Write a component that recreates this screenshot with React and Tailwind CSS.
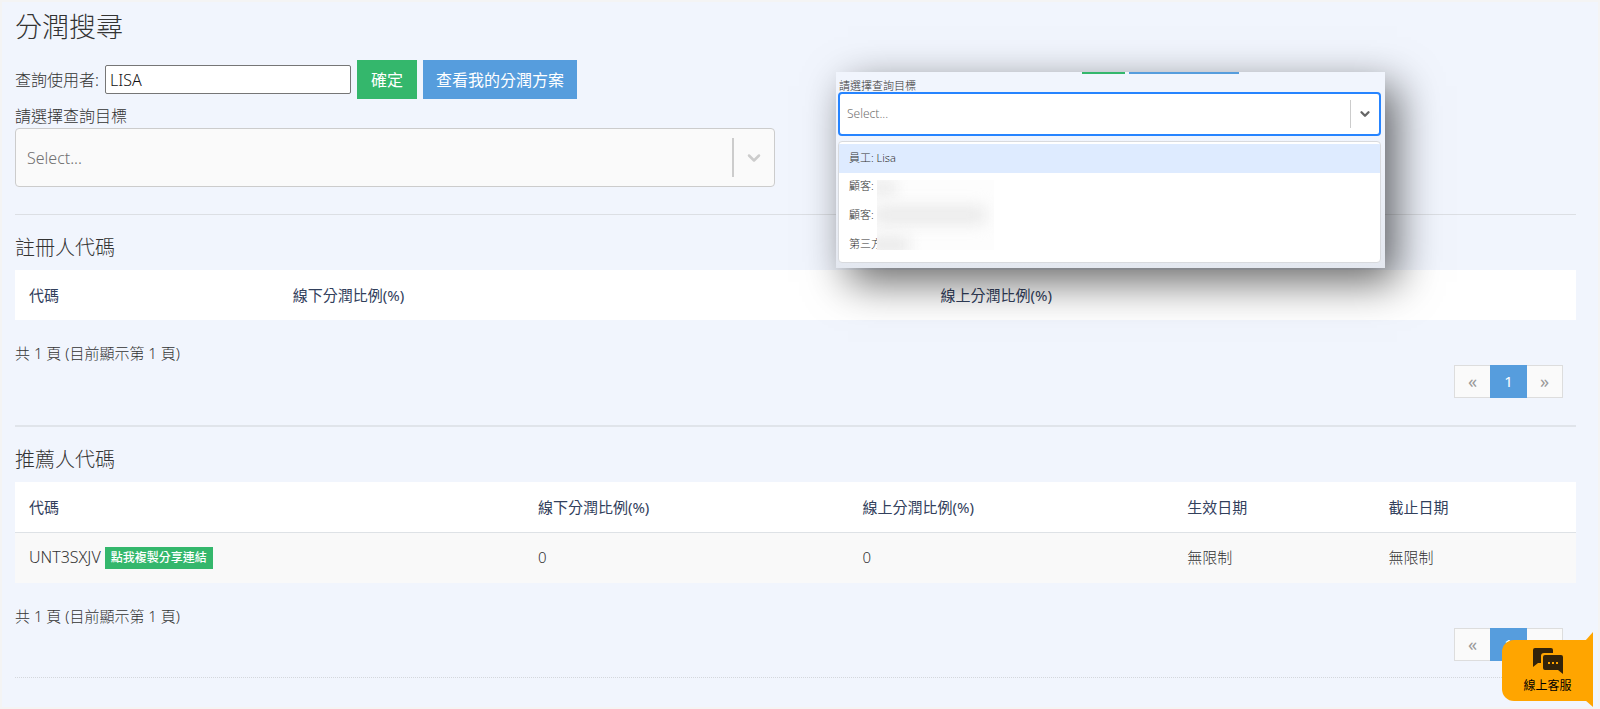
import React from 'react'
import { ChevronDown } from 'lucide-react'

const registerColumns = [
  { label: '代碼', width: 'w-[16.9%]' },
  { label: '線下分潤比例(%)', width: 'w-[41.5%]' },
  { label: '線上分潤比例(%)', width: 'w-[41.6%]' },
]

const referrerColumns = [
  { label: '代碼', width: 'w-[32.6%]' },
  { label: '線下分潤比例(%)', width: 'w-[20.8%]' },
  { label: '線上分潤比例(%)', width: 'w-[20.8%]' },
  { label: '生效日期', width: 'w-[12.9%]' },
  { label: '截止日期', width: 'w-[12.9%]' },
]

const referrerRows = [
  { code: 'UNT3SXJV', offline: '0', online: '0', start: '無限制', end: '無限制' },
]

const targets = ['員工: Lisa', '顧客:', '顧客:', '第三方']

function CodeTable({ columns, rows = [] }) {
  return (
    <table className="w-full table-fixed text-left text-[15px] leading-5">
      <thead className="bg-white text-[#32405c]">
        <tr className="h-[50px]">
          {columns.map((col) => (
            <th key={col.label} className={`${col.width} px-[14px] font-normal`}>
              {col.label}
            </th>
          ))}
        </tr>
      </thead>
      <tbody>
        {rows.map((row) => (
          <tr key={row.code} className="h-[51px] border-t border-[#dee2e6] bg-[#f9f9f9]">
            <td className="px-[14px] pb-[2px]">
              <div className="flex items-center gap-1">
                <span className="text-[16px]">{row.code}</span>
                <button className="mt-[3px] h-[22px] bg-[#34b76c] px-[6px] text-[12px] leading-[22px] font-medium text-white">
                  點我複製分享連結
                </button>
              </div>
            </td>
            <td className="px-[14px] pb-[2px]">{row.offline}</td>
            <td className="px-[14px] pb-[2px]">{row.online}</td>
            <td className="px-[14px] pb-[2px]">{row.start}</td>
            <td className="px-[14px] pb-[2px]">{row.end}</td>
          </tr>
        ))}
      </tbody>
    </table>
  )
}

function Pagination() {
  return (
    <nav className="mr-[13px] flex h-[33px] justify-end text-[15px]">
      <button
        aria-label="上一頁"
        className="w-9 border border-r-0 border-[#dddddd] bg-[#fafafa] pb-[2px] text-[18px] leading-7 font-normal text-[#999999]"
      >
        «
      </button>
      <button className="w-[37px] bg-[#569ddd] font-normal text-white">1</button>
      <button
        aria-label="下一頁"
        className="w-9 border border-l-0 border-[#dddddd] bg-[#fafafa] pb-[2px] text-[18px] leading-7 font-normal text-[#999999]"
      >
        »
      </button>
    </nav>
  )
}

function CodeSection({ title, columns, rows }) {
  return (
    <section>
      <h2 className="mb-2 text-[20px] leading-7">{title}</h2>
      <CodeTable columns={columns} rows={rows} />
      <p className="mt-[23px] mb-[2px] text-[15px] leading-5">共 1 頁 (目前顯示第 1 頁)</p>
      <Pagination />
    </section>
  )
}

function TargetPopup() {
  return (
    <div className="absolute top-[70px] left-[834px] flex h-[196px] w-[549px] flex-col bg-[#f1f5fd] px-[2px] text-[11px] leading-4 shadow-[12px_14px_40px_0px_rgba(0,0,0,0.6)]">
      <div className="flex h-[2px] gap-1 pl-[244px]">
        <span className="w-[43px] bg-[#34b76c]" />
        <span className="w-[110px] bg-[#569ddd]" />
      </div>
      <label htmlFor="popup-target" className="mt-1 h-[14px] pl-[1px] leading-4">
        請選擇查詢目標
      </label>
      <div className="mr-[2px] flex h-[44px] items-center rounded border-2 border-[#2684ff] bg-white">
        <select id="popup-target" className="h-full flex-1 appearance-none pl-[7px] text-[12px] text-[#707070] outline-none">
          <option>Select...</option>
        </select>
        <span className="h-7 w-px bg-[#cccccc]" />
        <span className="flex w-7 justify-center">
          <ChevronDown size={14} strokeWidth={4} className="text-[#666666]" />
        </span>
      </div>
      {/* the page tint gets darker towards the bottom of the menu */}
      <div className="-mx-[2px] flex flex-1 flex-col bg-linear-to-b from-[#f1f5fd] to-[#e4e8f0] px-[2px] pt-[5px]">
        <ul role="listbox" className="relative mr-[2px] h-[122px] overflow-hidden rounded border border-[#d8dade] bg-white pt-[2px]">
          {targets.map((target, i) => (
            <li
              key={i}
              role="option"
              aria-selected={i === 0}
              className={`flex items-center pl-[10px] ${i === 0 ? 'h-[29px] bg-[#deebff] pb-[2px]' : 'h-[29px] pb-[3px]'}`}
            >
              {target}
            </li>
          ))}
          <li aria-hidden="true" className="absolute top-[38px] left-[38px] h-[70px] w-[117px] overflow-hidden bg-[#fdfdfd]">
            <span className="absolute top-0 -left-2 h-4 w-7 bg-[#eeeeee] blur-[6px]" />
            <span className="absolute top-[27px] -left-1 h-4 w-[112px] bg-[#e7e7e7] blur-[8px]" />
            <span className="absolute top-[57px] -left-2 h-4 w-10 bg-[#e9e9e9] blur-[7px]" />
          </li>
        </ul>
      </div>
    </div>
  )
}

function ChatButton() {
  return (
    <button className="absolute right-[5px] bottom-[6px] flex h-[61px] w-[91px] flex-col items-center justify-center rounded-l-xl bg-[#ffa500] text-[12px] leading-4 font-normal text-black">
      <svg className="absolute -top-2 right-0" width="8" height="9" viewBox="0 0 8 9">
        <path d="M8 0 L8 9 L0 9 Z" fill="#ffa500" />
      </svg>
      <svg className="absolute right-0 -bottom-[6px]" width="8" height="7" viewBox="0 0 8 7">
        <path d="M0 0 L8 0 L8 7 Z" fill="#ffa500" />
      </svg>
      <svg width="30" height="26" viewBox="0 0 30 26" fill="#33230a">
        <path d="M2 0h16a2 2 0 0 1 2 2v3h-9a3 3 0 0 0-3 3v7H5l-5 4V2a2 2 0 0 1 2-2z" />
        <path d="M12 7h16a2 2 0 0 1 2 2v17l-5-4H12a2 2 0 0 1-2-2V9a2 2 0 0 1 2-2z" />
        <path d="M15 14h2v2h-2zM19 14h2v2h-2zM23 14h2v2h-2z" fill="#ffa500" />
      </svg>
      <span className="mt-1">線上客服</span>
    </button>
  )
}

export default function App() {
  return (
    <main className="relative min-h-screen border-2 border-[#f4f4f4] bg-[#f1f5fd] pr-[22px] pl-[13px] font-['Noto_Sans','Noto_Sans_CJK_TC',sans-serif] font-light text-[#333333]">
      <h1 className="pt-[7px] text-[27px] leading-9">分潤搜尋</h1>

      <div className="mt-[15px] flex h-[39px] items-center gap-[6px] text-[16px]">
        <label htmlFor="user" className="mr-[2px] w-[82px] whitespace-nowrap">
          查詢使用者:
        </label>
        <input
          id="user"
          defaultValue="LISA"
          className="h-[29px] w-[246px] rounded-xs border border-[#767676] bg-white px-1 text-[#111111]"
        />
        <button className="h-full bg-[#34b76c] px-[14px] font-normal text-white">確定</button>
        <button className="h-full bg-[#569ddd] px-[13px] font-normal text-white">查看我的分潤方案</button>
      </div>

      <div className="mt-[5px] w-[760px] text-[16px]">
        <label htmlFor="target" className="block leading-6">
          請選擇查詢目標
        </label>
        <div className="flex h-[59px] items-center rounded border border-[#cccccc] bg-[#fafafa]">
          <select id="target" className="h-full flex-1 appearance-none pl-[11px] text-[#707070] outline-none">
            <option>Select...</option>
          </select>
          <span className="h-[39px] w-[2px] bg-[#cccccc]" />
          <span className="flex w-10 justify-center">
            <ChevronDown size={20} strokeWidth={3} className="text-[#cccccc]" />
          </span>
        </div>
      </div>

      <hr className="mt-[27px] mb-[19px] border-[#dcdfe4]" />
      <CodeSection title="註冊人代碼" columns={registerColumns} />

      <hr className="mt-[27px] mb-[19px] border-t-2 border-[#e0e4ea]" />
      <CodeSection title="推薦人代碼" columns={referrerColumns} rows={referrerRows} />

      <hr className="mt-4 border-dotted border-[#d4d7dc]" />

      <TargetPopup />
      <ChatButton />
    </main>
  )
}
